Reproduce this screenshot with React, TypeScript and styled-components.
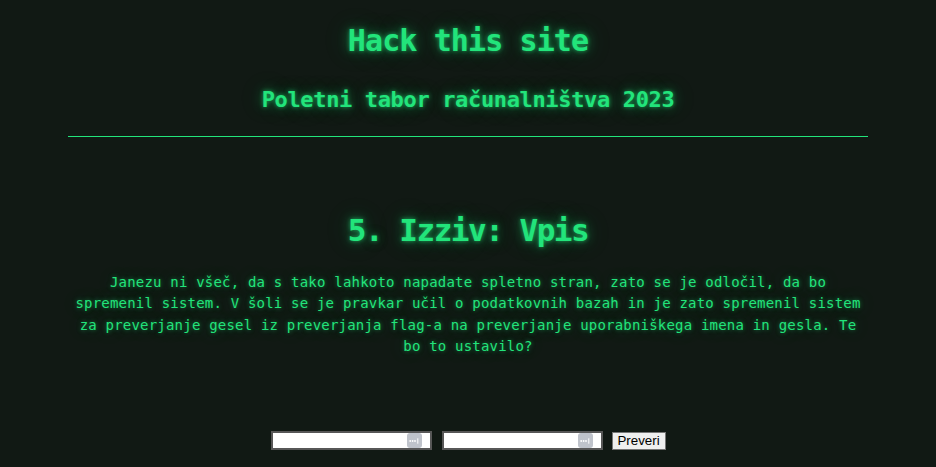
import React from "react";
import styled, { createGlobalStyle } from "styled-components";

const GREEN = "#22e47b";
const GLOW = "0 0 4px rgba(34, 228, 123, 0.6), 0 0 12px rgba(34, 228, 123, 0.45), 0 0 28px rgba(34, 228, 123, 0.22)";

const Global = createGlobalStyle`
  html, body {
    margin: 0;
    padding: 0;
    background: #111914;
  }
  body {
    font-family: "DejaVu Sans Mono", "Liberation Mono", monospace;
    color: ${GREEN};
  }
`;

const Page = styled.div`
  width: 800px;
  margin: 0 auto;
  padding-top: 23px;
  text-align: center;
`;

const Header = styled.header`
  display: flex;
  flex-direction: column;
  align-items: stretch;
`;

const Title = styled.h1`
  margin: 0;
  font-size: 30px;
  line-height: 36px;
  letter-spacing: -0.9px;
  font-weight: bold;
  text-shadow: ${GLOW};
`;

const Subtitle = styled.h3`
  margin: 28px 0 0;
  font-size: 22px;
  line-height: 26px;
  letter-spacing: -0.35px;
  font-weight: bold;
  text-shadow: ${GLOW};
`;

const Rule = styled.hr`
  margin: 23px 0 0;
  border: 0;
  border-top: 1px solid ${GREEN};
  height: 0;
`;

const Main = styled.main`
  display: flex;
  flex-direction: column;
  align-items: center;
`;

const ChallengeTitle = styled.h2`
  margin: 75px 0 0;
  font-size: 31px;
  line-height: 36px;
  letter-spacing: -1.5px;
  font-weight: bold;
  text-shadow: ${GLOW};
`;

const Text = styled.p`
  margin: 24px 0 0;
  width: 800px;
  font-size: 14px;
  line-height: 21.3px;
  letter-spacing: 0.2px;
  text-shadow: 0 0 4px rgba(34, 228, 123, 0.5), 0 0 18px rgba(34, 228, 123, 0.3);
`;

const Form = styled.form`
  margin-top: 74px;
  display: flex;
  align-items: center;
  gap: 10px;
`;

const Field = styled.div`
  position: relative;
  display: flex;
`;

const Input = styled.input`
  box-sizing: border-box;
  width: 161px;
  height: 19px;
  margin: 0;
  padding: 1px 2px;
  border: 2px solid #575757;
  background: #ffffff;
  font-family: "Liberation Sans", Arial, sans-serif;
  font-size: 13.33px;
  outline: none;
`;

const KeyBadge = styled.span`
  position: absolute;
  right: 10px;
  top: 2px;
  width: 15px;
  height: 15px;
  border-radius: 3px;
  background: #bfc3cb;
  display: flex;
  align-items: center;
  justify-content: center;
`;

const Button = styled.button`
  box-sizing: border-box;
  width: 54px;
  height: 18px;
  margin: 0 0 0 -1px;
  padding: 0;
  border: 1px solid #767676;
  background: #efefef;
  color: #000000;
  font-family: "Liberation Sans", Arial, sans-serif;
  font-size: 13.33px;
  line-height: 14px;
`;

const PasswordIcon = () => (
  <svg width="10" height="6" viewBox="0 0 10 6">
    <circle cx="1.2" cy="3" r="0.9" fill="#fff" />
    <circle cx="3.6" cy="3" r="0.9" fill="#fff" />
    <circle cx="6" cy="3" r="0.9" fill="#fff" />
    <rect x="8.3" y="0.3" width="1" height="5.4" fill="#fff" />
  </svg>
);

export default function App() {
  return (
    <>
      <Global />
      <Page>
        <Header>
          <Title>Hack this site</Title>
          <Subtitle>Poletni tabor računalništva 2023</Subtitle>
          <Rule />
        </Header>
        <Main>
          <ChallengeTitle>5. Izziv: Vpis</ChallengeTitle>
          <Text>
            Janezu ni všeč, da s tako lahkoto napadate spletno stran, zato se je odločil, da bo
            spremenil sistem. V šoli se je pravkar učil o podatkovnih bazah in je zato spremenil
            sistem za preverjanje gesel iz preverjanja flag-a na preverjanje uporabniškega imena
            in gesla. Te bo to ustavilo?
          </Text>
          <Form onSubmit={(e) => e.preventDefault()}>
            <Field>
              <Input type="password" name="username" />
              <KeyBadge>
                <PasswordIcon />
              </KeyBadge>
            </Field>
            <Field>
              <Input type="password" name="password" />
              <KeyBadge>
                <PasswordIcon />
              </KeyBadge>
            </Field>
            <Button type="submit">Preveri</Button>
          </Form>
        </Main>
      </Page>
    </>
  );
}
